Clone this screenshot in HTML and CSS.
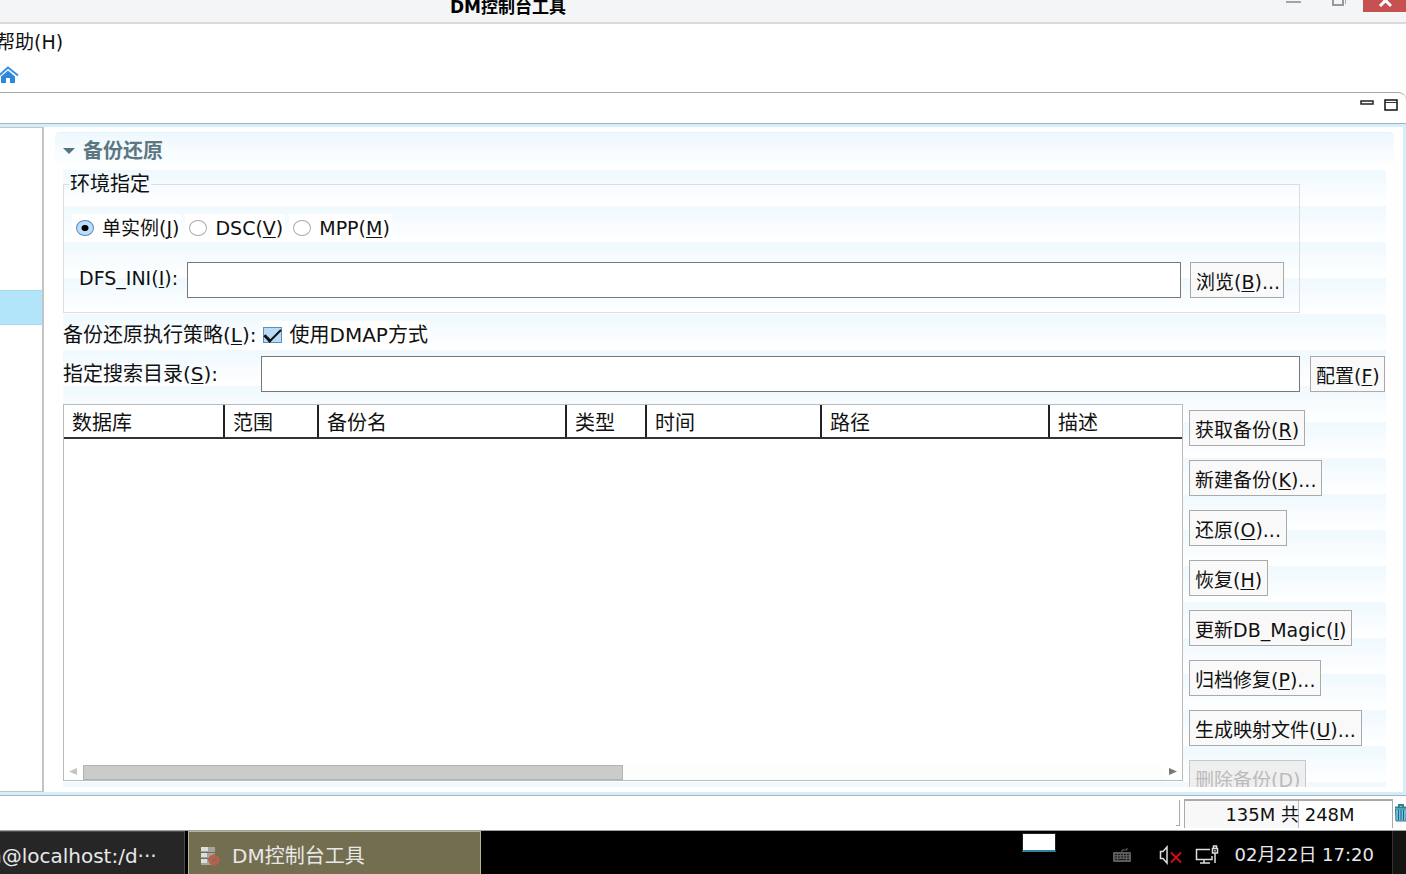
FILE: index.html
```
<!DOCTYPE html>
<html lang="zh-CN">

<head>
	<meta charset="UTF-8">
	<meta name="viewport" content="width=device-width, initial-scale=1.0">
	<title>DM控制台工具</title>
	<link rel="stylesheet" href="styles.css">
</head>

<body>
	<header class="titlebar">
		<h1>DM控制台工具</h1>
		<div class="window-buttons">
			<button type="button" class="win-min" aria-label="最小化">
				<svg width="16" height="12"><rect x="1" y="1" width="15" height="2" fill="#a3a3a3"/></svg>
			</button>
			<button type="button" class="win-restore" aria-label="还原窗口">
				<svg width="16" height="12"><path d="M2 -4V5H12V-4" fill="none" stroke="#999" stroke-width="2"/><path d="M14.500 0V4" stroke="#aaa"/></svg>
			</button>
			<button type="button" class="win-close" aria-label="关闭">
				<svg width="14" height="12"><path d="M2 6L7.500 .5L13 6M3 -4L7.500 .5L12 -4" fill="none" stroke="#fff" stroke-width="3"/></svg>
			</button>
		</div>
	</header>

	<nav class="menubar">
		<a href="#help">帮助(H)</a>
	</nav>

	<div class="toolbar">
		<button type="button" aria-label="主页">
			<svg width="19" height="18" viewBox="0 0 19 18"><path d="M-1 9.500L8 1.500L18 9.500" fill="none" stroke="#3b8fdf" stroke-width="2"/><path d="M8 4.500L15 10.500V17H10V12H6V17H1V10.500Z" fill="#2f88dc"/></svg>
		</button>
	</div>

	<main class="view">
		<div class="view-head">
			<button type="button" aria-label="最小化视图">
				<svg width="14" height="12"><rect x="1" y="2" width="12" height="3" fill="#fff" stroke="#222" stroke-width="1.500"/></svg>
			</button>
			<button type="button" aria-label="最大化视图">
				<svg width="14" height="12"><rect x="1" y="1" width="12" height="10" fill="#fff" stroke="#111" stroke-width="1.500"/><path d="M1 3.500H13" stroke="#333"/></svg>
			</button>
		</div>

		<div class="view-body">
			<aside class="side-list">
				<div class="side-selected"></div>
			</aside>

			<section class="panel">
				<h2 class="section-title">
					<svg width="12" height="6"><path d="M0 0H12L6 6Z" fill="#56747f"/></svg>
					备份还原
				</h2>

				<form class="form">
					<fieldset class="env">
						<legend>环境指定</legend>
						<div class="radios">
							<label><input type="radio" name="env" checked><span>单实例(<u>J</u>)</span></label>
							<label><input type="radio" name="env"><span>DSC(<u>V</u>)</span></label>
							<label><input type="radio" name="env"><span>MPP(<u>M</u>)</span></label>
						</div>
						<div class="ini-row">
							<label for="dfs-ini">DFS_INI(<u>I</u>):</label>
							<input type="text" id="dfs-ini">
							<button type="button" class="btn">浏览(<u>B</u>)...</button>
						</div>
					</fieldset>

					<div class="policy-row">
						<span>备份还原执行策略(<u>L</u>):</span>
						<label><input type="checkbox" checked><span>使用DMAP方式</span></label>
					</div>

					<div class="search-row">
						<label for="search-dir">指定搜索目录(<u>S</u>):</label>
						<input type="text" id="search-dir">
						<button type="button" class="btn">配置(<u>F</u>)</button>
					</div>

					<div class="backup-row">
						<div class="table-box">
							<table>
								<colgroup>
									<col class="c-db">
									<col class="c-range">
									<col class="c-name">
									<col class="c-type">
									<col class="c-time">
									<col class="c-path">
									<col>
								</colgroup>
								<thead>
									<tr>
										<th>数据库</th>
										<th>范围</th>
										<th>备份名</th>
										<th>类型</th>
										<th>时间</th>
										<th>路径</th>
										<th>描述</th>
									</tr>
								</thead>
								<tbody></tbody>
							</table>
							<div class="scrollbar">
								<svg width="10" height="8"><path d="M9 0V7L1 3.500Z" fill="#c4c4c4"/></svg>
								<div class="track"><div class="thumb"></div></div>
								<svg width="10" height="8"><path d="M1 0V7L9 3.500Z" fill="#777"/></svg>
							</div>
						</div>

						<div class="actions">
							<button type="button" class="btn">获取备份(<u>R</u>)</button>
							<button type="button" class="btn">新建备份(<u>K</u>)...</button>
							<button type="button" class="btn">还原(<u>O</u>)...</button>
							<button type="button" class="btn">恢复(<u>H</u>)</button>
							<button type="button" class="btn">更新DB_Magic(<u>I</u>)</button>
							<button type="button" class="btn">归档修复(<u>P</u>)...</button>
							<button type="button" class="btn">生成映射文件(<u>U</u>)...</button>
							<button type="button" class="btn" disabled>删除备份(<u>D</u>)</button>
						</div>
					</div>
				</form>
			</section>
		</div>
	</main>

	<div class="statusbar">
		<div class="grip"></div>
		<div class="heap">135M 共 248M</div>
		<button type="button" class="gc" aria-label="垃圾回收">
			<svg width="14" height="18" viewBox="0 0 14 18"><path d="M1 3.500H13M5 3V1H9V3" fill="none" stroke="#2f7f95" stroke-width="2"/><path d="M1.500 5H12.500L12 17H2Z" fill="#6fc3dc" stroke="#2c7890"/><path d="M4.500 6V16M7 6V16M9.500 6V16" stroke="#225f83"/></svg>
		</button>
	</div>

	<footer class="taskbar">
		<button type="button" class="task task-terminal"><span>n@localhost:/d···</span></button>
		<button type="button" class="task task-active">
			<svg width="20" height="20" viewBox="0 0 20 20">
				<path d="M1 1H15V6H1ZM1 7H15V12H1ZM1 13H15V19H1Z" fill="#a5a5a0"/>
				<path d="M1 1H8V5H1ZM1 7H7V11H1ZM1 13H7V17H1Z" fill="#ddd"/>
				<circle cx="14" cy="14" r="4" fill="none" stroke="#b5624a" stroke-width="3"/>
				<path d="M14 8V20M8 14H20M10 10L18 18M18 10L10 18" stroke="#b5624a" stroke-width="1.500"/>
				<circle cx="14" cy="14" r="2" fill="#8c6a58"/>
			</svg>
			<span>DM控制台工具</span>
		</button>
		<div class="pager"></div>
		<div class="tray">
			<svg width="20" height="18" viewBox="0 0 20 18"><rect x="1" y="6" width="18" height="10" rx="1" fill="#5c5c5c"/><path d="M3 8.500H17M3 11H17M3 13.500H5M15 13.500H17" stroke="#161616" stroke-dasharray="2 1"/><path d="M6 13.500H14" stroke="#1c1c1c"/><path d="M10 6V4H15V2" fill="none" stroke="#666"/></svg>
			<svg class="volume" width="24" height="20" viewBox="0 0 24 20"><path d="M1.500 6.500V13.500H4L8 18V2L4 6.500Z" fill="none" stroke="#ddd" stroke-width="1.500"/><path d="M12 7.500L22 17.500M22 7.500L12 17.500" stroke="#d60f0f" stroke-width="1.800"/></svg>
			<svg width="24" height="20" viewBox="0 0 24 20"><path d="M15 4.500H1.500V14.500H17V11M9 15V18M5 18H15" fill="none" stroke="#ddd" stroke-width="1.500"/><path d="M20 8V18M17.500 3.500H22.500V8H17.500ZM18.500 3V1H21.500V3M20 5V6.500" fill="none" stroke="#ddd" stroke-width="1.500"/></svg>
			<time>02月22日 17:20</time>
		</div>
		<button type="button" class="show-desktop" aria-label="显示桌面"></button>
	</footer>
</body>

</html>
```
FILE: styles.css
```
* {
	box-sizing: border-box;
}

body {
	margin: 0;
	height: 100vh;
	display: flex;
	flex-direction: column;
	overflow: hidden;
	background-color: #fff;
	color: #111;
	font-family: "DejaVu Sans", "Noto Sans CJK SC", sans-serif;
	font-size: 20px;
	line-height: 24px;
}

button,
input {
	font: inherit;
	color: inherit;
	margin: 0;
}

button {
	padding: 0;
	border: 0;
	background: none;
}

svg {
	display: block;
	flex: none;
}

u {
	text-underline-offset: 2px;
	text-decoration-thickness: 1px;
}

/* window frame */

.titlebar {
	flex: none;
	display: flex;
	justify-content: space-between;
	height: 24px;
	padding-left: 32vw;
	background-color: #f4f5f7;
	border-bottom: 2px solid #dadada;
}

.titlebar h1 {
	margin: 0;
	font-size: 17px;
	line-height: 14px;
	color: #000;
}

.window-buttons {
	display: flex;
	align-items: flex-start;
	gap: 30px;
}

.win-close {
	display: flex;
	justify-content: center;
	width: 43px;
	height: 12px;
	margin-left: -14px;
	background-color: #c75050;
}

.menubar {
	flex: none;
	padding: 6px 0;
	margin-left: -4px;
	font-size: 19px;
}

.menubar a {
	color: inherit;
	text-decoration: none;
}

.toolbar {
	flex: none;
	height: 32px;
	padding-top: 5px;
}

/* editor view */

.view {
	flex: 1;
	min-height: 0;
	display: flex;
	flex-direction: column;
	border-top: 1px solid #aaa;
	border-bottom: 1px solid #aab4bc;
	border-top-right-radius: 8px;
}

.view-head {
	flex: none;
	display: flex;
	justify-content: flex-end;
	align-items: flex-start;
	gap: 10px;
	height: 31px;
	padding: 6px 8px 0;
	border-bottom: 1px solid #aab4b8;
}

.view-body {
	flex: 1;
	min-height: 0;
	display: flex;
	border: 3px solid #d3effa;
	border-left: 0;
}

.side-list {
	flex: none;
	width: 44px;
	padding-top: 162px;
	border: 1px solid #c4c4c4;
	border-width: 1px 2px 1px 0;
}

.side-selected {
	height: 35px;
	background-color: #b3e5fa;
	border: 1px solid #a3dcf2;
	border-width: 1px 0;
}

.panel {
	flex: 1;
	min-width: 0;
	display: flex;
	flex-direction: column;
	padding: 5px 9px 5px 11px;
}

.section-title {
	flex: none;
	display: flex;
	align-items: center;
	gap: 8px;
	height: 38px;
	margin: 0;
	padding: 0 0 2px 8px;
	font-size: 20px;
	color: #5b7782;
	background-image: linear-gradient(#eef8fe, #fff);
	border-top: 1px solid #e2f5fc;
	border-radius: 5px 5px 0 0;
}

.form {
	flex: 1;
	min-height: 0;
	display: flex;
	flex-direction: column;
	margin: 0 8px;
	background-image: linear-gradient(#eff9fe, #fff);
	background-size: 100% 36px;
	overflow: hidden;
}

.env {
	flex: none;
	min-width: 0;
	margin: 2px 86px 0 0;
	padding: 0 15px 14px 8px;
	border: 1px solid #ddd;
}

.env legend {
	margin-left: -3px;
	padding: 0 1px;
}

.radios {
	display: flex;
	gap: 4px;
	margin: 18px 0 20px;
	font-size: 19px;
}

.radios label,
.policy-row label {
	display: flex;
	align-items: center;
	gap: 8px;
	padding: 2px;
	background-color: #fff;
}

.radios label {
	padding-left: 4px;
}

input[type="radio"] {
	appearance: none;
	width: 18px;
	height: 16px;
	border: 1px solid #aaa;
	border-radius: 50%;
	background-color: #fff;
}

input[type="radio"]:checked {
	border-color: #5288bd;
	background-image: radial-gradient(#000 3px, #bcdcf8 4px);
}

.ini-row,
.search-row {
	display: grid;
	align-items: center;
}

.ini-row {
	grid-template-columns: 108px 1fr 94px;
	column-gap: 9px;
	margin-left: 7px;
}

.ini-row label {
	padding-bottom: 5px;
	font-size: 19px;
}

.ini-row input {
	margin-left: -9px;
}

input[type="text"] {
	min-width: 0;
	height: 36px;
	padding: 0 6px;
	border: 1px solid #777;
	background-color: #fff;
}

.btn {
	height: 36px;
	padding: 3px 5px 0;
	border: 1px solid #aaa;
	background-color: #f9f9f9;
	font-size: 19px;
	white-space: nowrap;
}

.btn:disabled {
	color: #bbb;
	border-color: #c8c8c8;
	background-color: #efefef;
}

.policy-row {
	flex: none;
	display: flex;
	align-items: center;
	gap: 4px;
	margin: 8px 0 7px;
}

input[type="checkbox"] {
	appearance: none;
	width: 19px;
	height: 16px;
	border: 1px solid #5b8fbd;
	background-color: #b9dbf7;
	display: grid;
	place-items: center;
}

input[type="checkbox"]:checked::after {
	content: "";
	width: 7px;
	height: 14px;
	border: solid #111;
	border-width: 0 2px 3px 0;
	transform: translateY(-3px) rotate(45deg);
}

.search-row {
	flex: none;
	grid-template-columns: 198px 1fr 75px;
	margin-bottom: 12px;
	margin-right: 1px;
}

.search-row input {
	margin-right: 10px;
}

.backup-row {
	flex: 1;
	min-height: 0;
	display: flex;
	gap: 6px;
}

.table-box {
	flex: 1;
	min-width: 0;
	display: flex;
	flex-direction: column;
	justify-content: space-between;
	margin-bottom: 6px;
	border: 1px solid #bbb;
	background-color: #fff;
}

table {
	width: 100%;
	table-layout: fixed;
	border-collapse: collapse;
}

.c-db { width: 160px; }
.c-range { width: 94px; }
.c-name { width: 248px; }
.c-type { width: 80px; }
.c-time { width: 175px; }
.c-path { width: 228px; }

th {
	height: 33px;
	padding: 4px 8px 0;
	text-align: left;
	font-weight: normal;
	border-right: 2px solid #222;
	border-bottom: 2px solid #333;
}

th:last-child {
	border-right: 0;
}

.scrollbar {
	display: flex;
	align-items: center;
	gap: 5px;
	height: 16px;
	padding: 0 4px;
}

.track {
	flex: 1;
	height: 15px;
	background-color: #fdfdfd;
}

.thumb {
	width: 50%;
	height: 100%;
	border: 1px solid #b3b3b3;
	background-color: #cbcbcb;
}

.actions {
	flex: none;
	display: flex;
	flex-direction: column;
	align-items: flex-start;
	gap: 14px;
	width: 197px;
	padding-top: 6px;
}

.actions .btn {
	flex: none;
}

/* status bar */

.statusbar {
	flex: none;
	display: flex;
	align-items: center;
	justify-content: flex-end;
	height: 35px;
	border-bottom: 1px solid #9aa3a0;
}

.grip {
	width: 4px;
	height: 26px;
	margin-right: 4px;
	border: 1px solid #aaa;
	border-width: 0 1px 1px 0;
}

.heap {
	width: 209px;
	height: 29px;
	padding-left: 3px;
	border: 1px solid #aaa;
	border-width: 2px 1px 0;
	background: linear-gradient(90deg, #f8f8f8 113px, #bbb 113px, #bbb 114px, #fff 114px);
	font-size: 18px;
	line-height: 28px;
	text-align: center;
}

.gc {
	width: 12px;
	margin-left: 1px;
	overflow: hidden;
}

/* desktop taskbar */

.taskbar {
	flex: none;
	display: flex;
	height: 43px;
	background-color: #000;
	color: #e8e8e8;
}

.task {
	display: flex;
	align-items: center;
	overflow: hidden;
	padding-top: 5px;
	border: 1px solid #4d4d4d;
	border-bottom: 0;
}

.task-terminal {
	width: 185px;
	margin-right: 3px;
	border-left: 0;
	background-color: #262626;
}

.task-terminal span {
	margin-left: -11px;
}

.task-active {
	width: 293px;
	gap: 12px;
	padding-left: 11px;
	border-color: #b9b48f;
	background-color: #736e50;
}

.pager {
	width: 34px;
	height: 19px;
	margin: 2px 56px 0 auto;
	border: 1px solid #222;
	border-bottom: 2px solid #347f9c;
	background-color: #fff;
}

.tray {
	display: flex;
	align-items: center;
	gap: 12px;
	padding: 4px 18px 0 0;
}

.volume {
	margin-left: 15px;
}

.tray time {
	margin-left: 4px;
	font-size: 18px;
}

.show-desktop {
	width: 14px;
	border-left: 1px solid #333;
	background-color: #141414;
}
```
